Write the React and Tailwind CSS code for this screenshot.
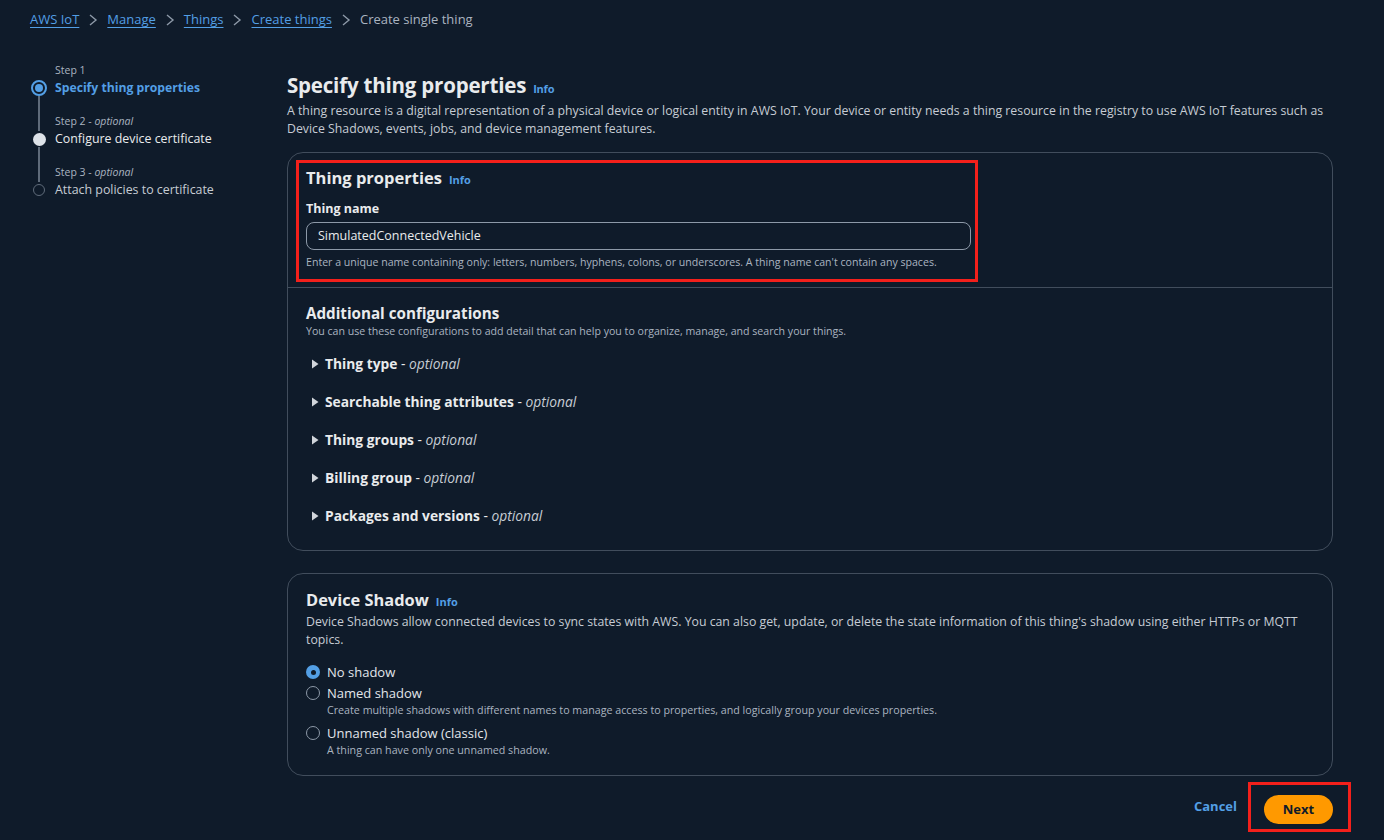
import React from "react";

const font = { fontFamily: '"Open Sans", "Noto Sans", Arial, sans-serif' };

const Info = () => (
  <span className="text-[11px] leading-none font-bold text-[#539fe5] ml-[7px]">Info</span>
);

const Chevron = () => (
  <svg width="10" height="12" viewBox="0 0 10 12" className="mx-[9px]">
    <path d="M2 1l6 5-6 5" fill="none" stroke="#8d99a8" strokeWidth="1.4" />
  </svg>
);

const Caret = () => (
  <svg width="8" height="10" viewBox="0 0 8 10" className="mr-[6px]">
    <path d="M1 0.5l6.5 4.5-6.5 4.5z" fill="#d1d5db" />
  </svg>
);

const expanders = [
  "Thing type",
  "Searchable thing attributes",
  "Thing groups",
  "Billing group",
  "Packages and versions",
];

const steps = [
  { step: "Step 1", optional: false, label: "Specify thing properties", state: "active" },
  { step: "Step 2", optional: true, label: "Configure device certificate", state: "next" },
  { step: "Step 3", optional: true, label: "Attach policies to certificate", state: "todo" },
];

const Radio = ({ checked, label, desc }) => (
  <div className={desc ? "flex items-start pb-[5px]" : "flex items-start"}>
    {checked ? (
      <span className="mt-[3px] w-[14px] h-[14px] rounded-full bg-[#539fe5] flex items-center justify-center shrink-0">
        <span className="w-[5px] h-[5px] rounded-full bg-[#0f1b2a]" />
      </span>
    ) : (
      <span className="mt-[3px] w-[14px] h-[14px] rounded-full border-[1.5px] border-[#8d99a8] shrink-0" />
    )}
    <div className="ml-[7px]">
      <div className="text-[13px] text-[#e2e6ea] leading-[20px]">{label}</div>
      {desc && <div className="text-[10.7px] text-[#aab4c0] leading-[14px]">{desc}</div>}
    </div>
  </div>
);

export default function App() {
  return (
    <div className="w-[1384px] h-[840px] bg-[#0f1b2a] text-[#d5dbdb] overflow-hidden" style={font}>
      {/* breadcrumb */}
      <div className="flex items-center pl-[30px] pt-[10px] h-[30px] text-[13px]">
        <a className="text-[#539fe5] underline underline-offset-[3px]">AWS IoT</a>
        <Chevron />
        <a className="text-[#539fe5] underline underline-offset-[3px]">Manage</a>
        <Chevron />
        <a className="text-[#539fe5] underline underline-offset-[3px]">Things</a>
        <Chevron />
        <a className="text-[#539fe5] underline underline-offset-[3px]">Create things</a>
        <Chevron />
        <span className="text-[#aab4c0]">Create single thing</span>
      </div>

      <div className="flex pt-[32px]">
        {/* steps */}
        <div className="w-[287px] pl-[31px] shrink-0">
          {steps.map((s, i) => (
            <div key={s.step} className="flex h-[51px]">
              <div className="flex flex-col items-center w-[16px]">
                <span className={i === 0 ? "h-[18px]" : "w-[1.5px] h-[18px] bg-[#5f6b7a]"} />
                <span className="w-[16px] h-[16px] flex items-center justify-center">
                  {s.state === "active" && (
                    <span className="w-[16px] h-[16px] rounded-full border-2 border-[#539fe5] flex items-center justify-center">
                      <span className="w-[8px] h-[8px] rounded-full bg-[#539fe5]" />
                    </span>
                  )}
                  {s.state === "next" && <span className="w-[13px] h-[13px] rounded-full bg-[#dde2e8]" />}
                  {s.state === "todo" && (
                    <span className="w-[12px] h-[12px] rounded-full border-[1.5px] border-[#5f6b7a]" />
                  )}
                </span>
                {i < 2 && <span className="w-[1.5px] flex-1 bg-[#5f6b7a]" />}
              </div>
              <div className="ml-[8px]">
                <div className="text-[10.5px] text-[#aab4c0] leading-[16px]">
                  {s.step}
                  {s.optional && (
                    <>
                      {" - "}
                      <i>optional</i>
                    </>
                  )}
                </div>
                <div
                  className={
                    s.state === "active"
                      ? "text-[12.2px] font-bold text-[#539fe5] leading-[20px]"
                      : s.state === "next"
                      ? "text-[12.4px] text-[#e9ebed] leading-[20px]"
                      : "text-[12.4px] text-[#c6ccd4] leading-[20px]"
                  }
                >
                  {s.label}
                </div>
              </div>
            </div>
          ))}
        </div>

        {/* main */}
        <div className="w-[1046px] pt-[7px]">
          <h1 className="text-[20.5px] font-bold text-[#e9ebed] leading-[32px] tracking-[-0.2px]">
            Specify thing properties
            <Info />
          </h1>
          <p className="text-[12.3px] text-[#c6ccd4] leading-[18px] mt-[1px]">
            A thing resource is a digital representation of a physical device or logical entity in AWS IoT. Your device or entity needs a thing resource in the registry to use AWS IoT features such as Device Shadows, events, jobs, and device management features.
          </p>

          <div className="mt-[14px] border border-[#414d5c] rounded-[16px]">
            <div className="px-[8px] pt-[7px] pb-[5px]">
              <div className="w-[682px] border-[3px] border-[#f3201b] px-[7px] pt-[2px] pb-[10px]">
                <h2 className="text-[16.5px] font-bold text-[#e9ebed] leading-[26px]">
                  Thing properties
                  <Info />
                </h2>
                <div className="text-[12.5px] font-bold text-[#e9ebed] mt-[8px] leading-[20px]">Thing name</div>
                <div className="mt-[3px] w-[665px] h-[28px] border border-[#8d99a8] rounded-[8px] flex items-center px-[11px] text-[12.5px] text-[#e9ebed] bg-[#0f1b2a]">
                  SimulatedConnectedVehicle
                </div>
                <div className="text-[10.6px] text-[#aab4c0] mt-[5px] leading-[14px]">
                  Enter a unique name containing only: letters, numbers, hyphens, colons, or underscores. A thing name can't contain any spaces.
                </div>
              </div>
            </div>
            <div className="border-t border-[#414d5c] px-[18px] pt-[14px] pb-[23px]">
              <h2 className="text-[15.2px] font-bold text-[#e9ebed] leading-[22px]">Additional configurations</h2>
              <div className="text-[10.6px] text-[#aab4c0] leading-[14px]">
                You can use these configurations to add detail that can help you to organize, manage, and search your things.
              </div>
              <div className="mt-[15px] pl-[5px] flex flex-col gap-[16px]">
                {expanders.map((e) => (
                  <div key={e} className="flex items-center h-[22px] text-[13.8px]">
                    <Caret />
                    <span className="font-bold text-[#e9ebed]">{e}</span>
                    <span className="text-[#e9ebed]">&nbsp;-&nbsp;</span>
                    <i className="text-[#c6ccd4]">optional</i>
                  </div>
                ))}
              </div>
            </div>
          </div>

          <div className="mt-[22px] border border-[#414d5c] rounded-[16px] px-[18px] pt-[14px] pb-[13px]">
            <h2 className="text-[16.4px] font-bold text-[#e9ebed] leading-[24px]">
              Device Shadow
              <Info />
            </h2>
            <p className="text-[12.3px] text-[#c6ccd4] leading-[18px] mt-[1px]">
              Device Shadows allow connected devices to sync states with AWS. You can also get, update, or delete the state information of this thing's shadow using either HTTPs or MQTT topics.
            </p>
            <div className="mt-[13px] flex flex-col gap-[1px]">
              <Radio checked label="No shadow" />
              <Radio
                label="Named shadow"
                desc="Create multiple shadows with different names to manage access to properties, and logically group your devices properties."
              />
              <Radio label="Unnamed shadow (classic)" desc="A thing can have only one unnamed shadow." />
            </div>
          </div>

          <div className="flex justify-end items-center mt-[6px] mr-[-18px]">
            <span className="text-[13px] font-bold text-[#539fe5] mr-[11px]">Cancel</span>
            <div className="border-[3px] border-[#f3201b] pl-[13px] pr-[15px] pt-[10px] pb-[5px]">
              <div className="w-[69px] h-[29px] rounded-full bg-[#ff9900] flex items-center justify-center text-[13px] font-bold text-[#0f1b2a]">
                Next
              </div>
            </div>
          </div>
        </div>
      </div>
    </div>
  );
}
